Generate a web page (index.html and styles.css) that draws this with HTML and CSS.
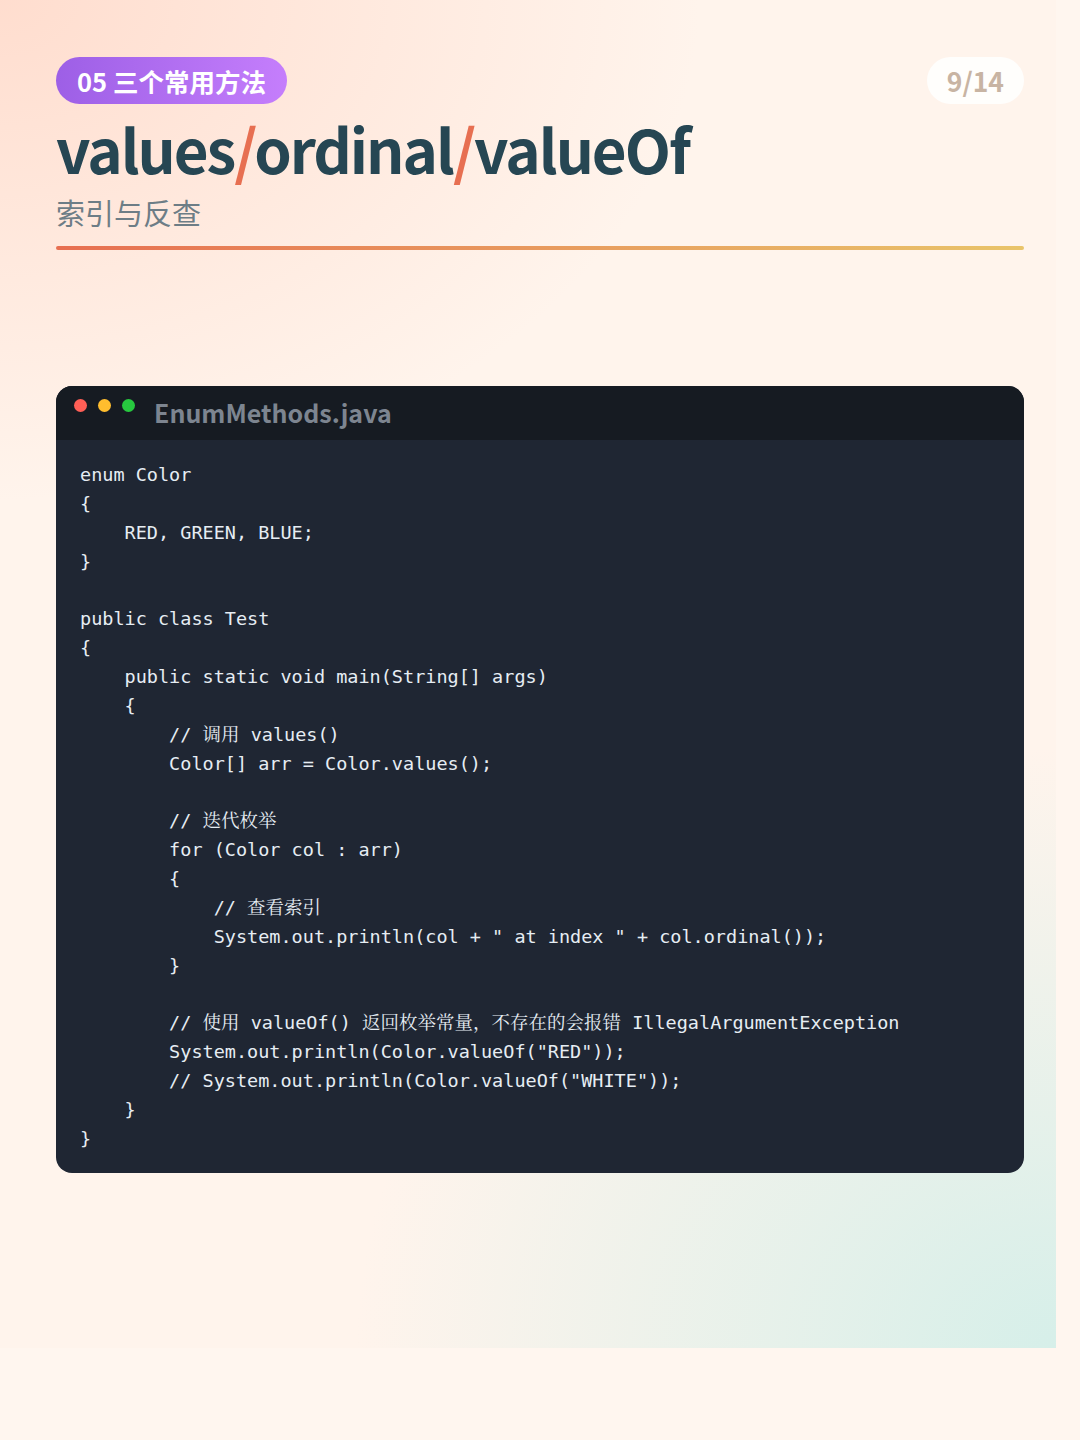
FILE: index.html
```html
<!DOCTYPE html>
<html lang="zh">
<head>
<meta charset="utf-8">
<link rel="stylesheet" href="styles.css">
</head>
<body>
<main class="slide">
  <header class="top">
    <div class="badge">05 三个常用方法</div>
    <div class="pager">9/14</div>
  </header>
  <h1 class="title">values<span class="slash">/</span>ordinal<span class="slash">/</span>valueOf</h1>
  <p class="subtitle">索引与反查</p>
  <div class="rule"></div>

  <section class="window">
    <div class="win-bar">
      <span class="dot red"></span>
      <span class="dot yellow"></span>
      <span class="dot green"></span>
      <span class="fname">EnumMethods.java</span>
    </div>
<pre class="code">enum Color
{
    RED, GREEN, BLUE;
}

public class Test
{
    public static void main(String[] args)
    {
        // 调用 values()
        Color[] arr = Color.values();

        // 迭代枚举
        for (Color col : arr)
        {
            // 查看索引
            System.out.println(col + " at index " + col.ordinal());
        }

        // 使用 valueOf() 返回枚举常量，不存在的会报错 IllegalArgumentException
        System.out.println(Color.valueOf("RED"));
        // System.out.println(Color.valueOf("WHITE"));
    }
}</pre>
  </section>
</main>
</body>
</html>
```

FILE: styles.css
```css
html, body {
  margin: 0;
  padding: 0;
}
body {
  background: #fff6ef;
  width: 1080px;
  height: 1440px;
  overflow: hidden;
}
.slide {
  box-sizing: border-box;
  width: 1056px;
  height: 1348px;
  padding: 57px 32px 0 56px;
  background:
    radial-gradient(ellipse 700px 500px at 0% 0%, rgba(255, 220, 205, 0.95), rgba(255, 220, 205, 0) 100%),
    radial-gradient(ellipse 700px 600px at 100% 100%, rgba(214, 239, 233, 1), rgba(214, 239, 233, 0) 100%),
    #fff4ec;
  font-family: "Noto Sans CJK SC", "Noto Sans", sans-serif;
}
.top {
  display: flex;
  justify-content: space-between;
  align-items: center;
  height: 47px;
}
.badge {
  height: 47px;
  box-sizing: border-box;
  padding: 0 21px;
  border-radius: 24px;
  background: linear-gradient(90deg, #9d5fe6, #c57efc);
  color: #fff;
  font-weight: 700;
  font-size: 25.5px;
  line-height: 47px;
}
.pager {
  height: 47px;
  box-sizing: border-box;
  padding: 0 20px;
  border-radius: 24px;
  background: rgba(255, 255, 255, 0.85);
  color: #c8b4a3;
  font-weight: 700;
  font-size: 26.5px;
  line-height: 47px;
}
.title {
  margin: 6px 0 0;
  font-size: 60px;
  line-height: 76px;
  font-weight: 700;
  color: #264653;
  letter-spacing: -2px;
}
.slash {
  color: #e76f51;
}
.subtitle {
  margin: 4px 0 0;
  font-size: 29px;
  line-height: 44px;
  color: #6d7d86;
}
.rule {
  margin-top: 12px;
  height: 4px;
  border-radius: 2px;
  background: linear-gradient(90deg, #e76f51, #e9c46a);
}
.window {
  margin-top: 136px;
  border-radius: 16px;
  overflow: hidden;
  background: #1f2633;
}
.win-bar {
  height: 54px;
  background: #161b22;
  display: flex;
  align-items: center;
  padding-left: 18px;
  box-sizing: border-box;
}
.dot {
  width: 13px;
  height: 13px;
  border-radius: 50%;
  margin-right: 11px;
  position: relative;
  top: -8px;
}
.red { background: #ff5f56; }
.yellow { background: #ffbd2e; }
.green { background: #27c93f; }
.fname {
  margin-left: 8px;
  margin-top: -3px;
  color: #7d8590;
  font-weight: 700;
  font-size: 25px;
}
.code {
  margin: 0;
  padding: 21px 24px 19px;
  font-family: "DejaVu Sans Mono", "Noto Serif CJK SC", "Noto Sans CJK SC", monospace;
  font-size: 18.5px;
  line-height: 28.86px;
  color: #e6edf3;
}
```
